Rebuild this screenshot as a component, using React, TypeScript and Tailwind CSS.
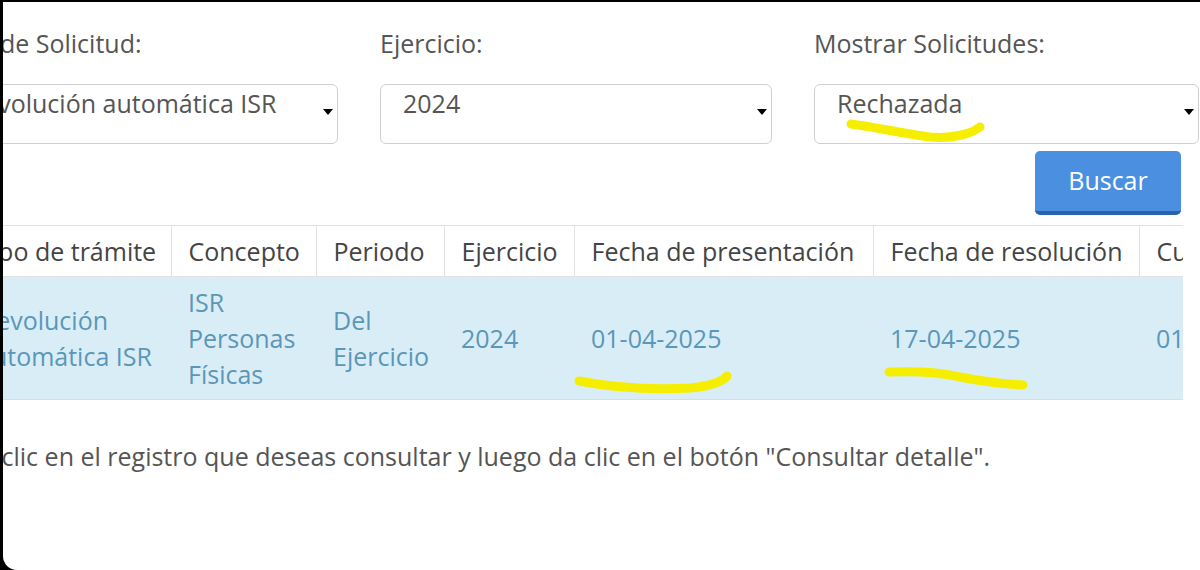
import type { ReactNode } from "react";

const font = { fontFamily: '"Open Sans", "Noto Sans", sans-serif' };

function Field({
  label,
  value,
  className,
}: {
  label: string;
  value: string;
  className: string;
}) {
  return (
    <div className={className}>
      <div className="text-[25px] leading-[36px] text-[#555]">{label}</div>
      <div className="relative mt-[23px] h-[60px] rounded-[6px] border border-[#cfcfcf] bg-white pl-[22px]">
        <span className="block whitespace-nowrap text-[25px] leading-[36px] text-[#555]">
          {value}
        </span>
        <span className="absolute right-[4px] top-[24px] h-0 w-0 border-x-[5px] border-t-[6px] border-x-transparent border-t-black" />
      </div>
    </div>
  );
}

function Th({ children, className }: { children: ReactNode; className: string }) {
  return (
    <th
      className={`border-l border-[#e2e2e2] px-[17px] py-[7px] text-left align-middle font-normal whitespace-nowrap text-[#444] first:border-l-0 ${className}`}
    >
      {children}
    </th>
  );
}

function Td({ children }: { children: ReactNode }) {
  return <td className="px-[17px] py-[7px] align-middle text-[#5a97b8]">{children}</td>;
}

export default function App() {
  return (
    <div
      className="relative h-[570px] w-[1200px] overflow-hidden bg-black pl-[3px] pt-[2px]"
      style={font}
    >
      <div className="h-full overflow-hidden rounded-bl-[14px] bg-white">
        <div className="ml-[-60px] w-[1400px] pt-[23px]">
          <div className="flex gap-[42px]">
            <Field className="w-[395px]" label="Tipo de Solicitud:" value="Devolución automática ISR" />
            <Field className="w-[392px]" label="Ejercicio:" value="2024" />
            <Field className="w-[385px]" label="Mostrar Solicitudes:" value="Rechazada" />
          </div>

          <div className="flex w-[1238px] justify-end pt-[7px]">
            <button className="h-[64px] w-[146px] rounded-[5px] border-b-[4px] border-[#2a63ad] bg-[#4a8fe0] text-[25px] text-white">
              Buscar
            </button>
          </div>

          <div className="ml-[18px] mt-[10px] w-[1222px] overflow-hidden">
            <table className="w-[1400px] table-fixed border-collapse text-[25px] leading-[36px]">
              <thead>
                <tr className="border-y border-[#e2e2e2]">
                  <Th className="w-[210px]">Tipo de trámite</Th>
                  <Th className="w-[145px]">Concepto</Th>
                  <Th className="w-[128px]">Periodo</Th>
                  <Th className="w-[130px]">Ejercicio</Th>
                  <Th className="w-[299px]">Fecha de presentación</Th>
                  <Th className="w-[266px]">Fecha de resolución</Th>
                  <Th className="w-[222px]">Cuenta CLABE</Th>
                </tr>
              </thead>
              <tbody>
                <tr className="h-[123px] border-b border-[#dcdcdc] bg-[#d9edf7]">
                  <Td>Devolución automática ISR</Td>
                  <Td>ISR Personas Físicas</Td>
                  <Td>Del Ejercicio</Td>
                  <Td>2024</Td>
                  <Td>01-04-2025</Td>
                  <Td>17-04-2025</Td>
                  <Td>012180015</Td>
                </tr>
              </tbody>
            </table>
          </div>

          <p className="ml-[20px] mt-[38px] whitespace-nowrap text-[25px] leading-[36px] text-[#555]">
            Da clic en el registro que deseas consultar y luego da clic en el botón "Consultar detalle".
          </p>
        </div>
      </div>

      {/* highlighter marks drawn over the screenshot */}
      <svg
        className="pointer-events-none absolute inset-0"
        width="1200"
        height="570"
        viewBox="0 0 1200 570"
        fill="none"
        stroke="#f6ee00"
        strokeWidth="9"
        strokeLinecap="round"
      >
        <path d="M851 124 C 880 128, 905 134, 930 137 C 955 139, 972 133, 980 127" />
        <path d="M579 381 C 610 387, 650 390, 690 388 C 712 386, 722 382, 727 376" />
        <path d="M889 372 C 915 371, 940 372, 960 377 C 985 382, 1005 384, 1023 385" />
      </svg>
    </div>
  );
}
